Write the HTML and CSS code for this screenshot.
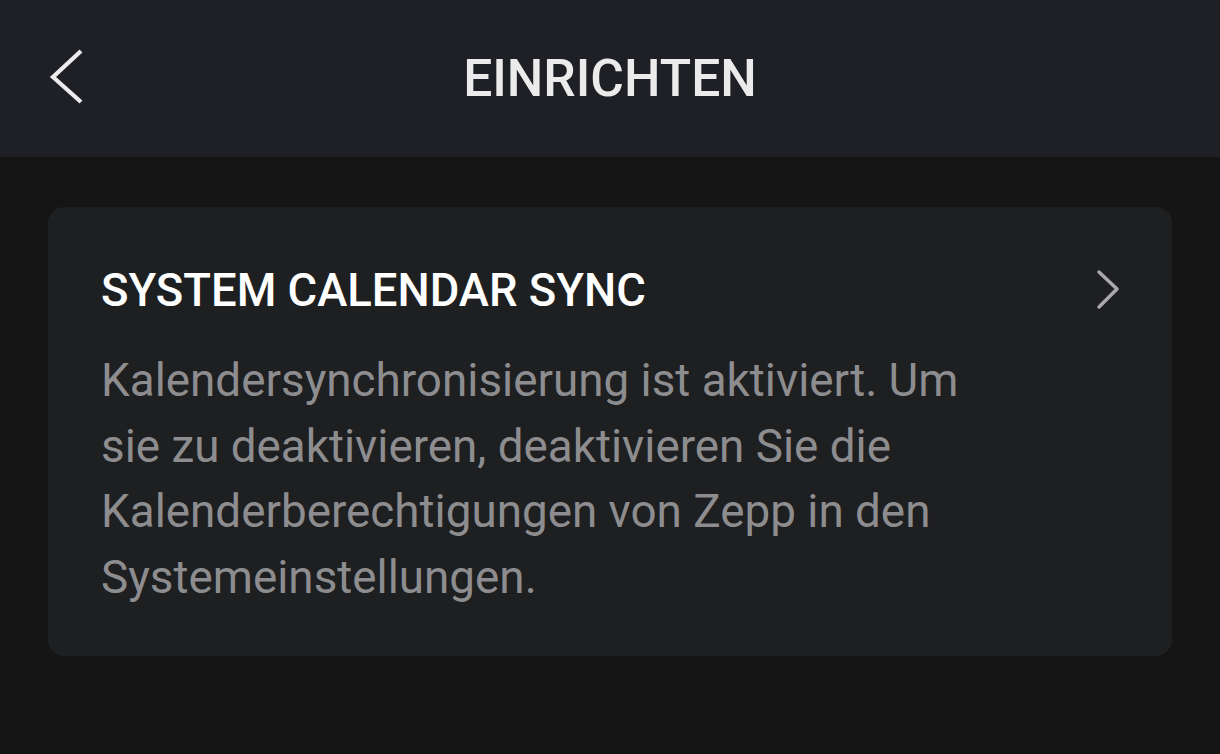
FILE: index.html
```html
<!DOCTYPE html>
<html lang="de">

<head>
  <meta charset="UTF-8">
  <title>Einrichten</title>
  <link rel="stylesheet" href="styles.css">
</head>

<body>
  <div class="top-bar">
    <button class="back-btn" aria-label="Zurück">
      <svg width="44" height="64" viewBox="0 0 44 64">
        <polyline points="35,7 7,33 35,58" fill="none" stroke="#ececec" stroke-width="4.2" stroke-linecap="butt" />
      </svg>
    </button>
    <h1>EINRICHTEN</h1>
  </div>

  <div class="content">
    <div class="sync-card">
      <div class="card-text">
        <h2>SYSTEM CALENDAR SYNC</h2>
        <p>Kalendersynchronisierung ist aktiviert. Um sie zu deaktivieren, deaktivieren Sie die Kalenderberechtigungen von Zepp in den Systemeinstellungen.</p>
      </div>
      <svg class="chevron" width="30" height="46" viewBox="0 0 30 46">
        <polyline points="7,5 25,22 7,40" fill="none" stroke="#a9a9ab" stroke-width="3.5" stroke-linecap="round" stroke-linejoin="round" />
      </svg>
    </div>
  </div>
</body>

</html>
```

FILE: styles.css
```css
body {
  background-color: #151515;
  font-family: Roboto, "Noto Sans", sans-serif;
  margin: 0;
  height: 100vh;
}

.top-bar {
  background-color: #1f2025;
  height: 157px;
  display: flex;
  align-items: center;
  justify-content: center;
  position: relative;
}

.back-btn {
  position: absolute;
  left: 46px;
  top: 44px;
  background: none;
  border: none;
  padding: 0;
  cursor: pointer;
}

.top-bar h1 {
  margin: 0;
  color: #ebebeb;
  font-size: 51.5px;
  font-weight: 500;
}

.content {
  padding: 50px 48px;
}

.sync-card {
  background-color: #1e1f21;
  border-radius: 16px;
  height: 449px;
  box-sizing: border-box;
  padding: 36px 50px 0 53px;
  display: flex;
  justify-content: space-between;
  align-items: flex-start;
}

.card-text h2 {
  margin: 0 0 9px;
  color: #ffffff;
  font-size: 45.4px;
  font-weight: 500;
  line-height: 96px;
}

.card-text p {
  margin: 0;
  width: 920px;
  color: #8d8d8f;
  font-size: 45.8px;
  line-height: 65.5px;
}

.chevron {
  margin-top: 24px;
}
```
